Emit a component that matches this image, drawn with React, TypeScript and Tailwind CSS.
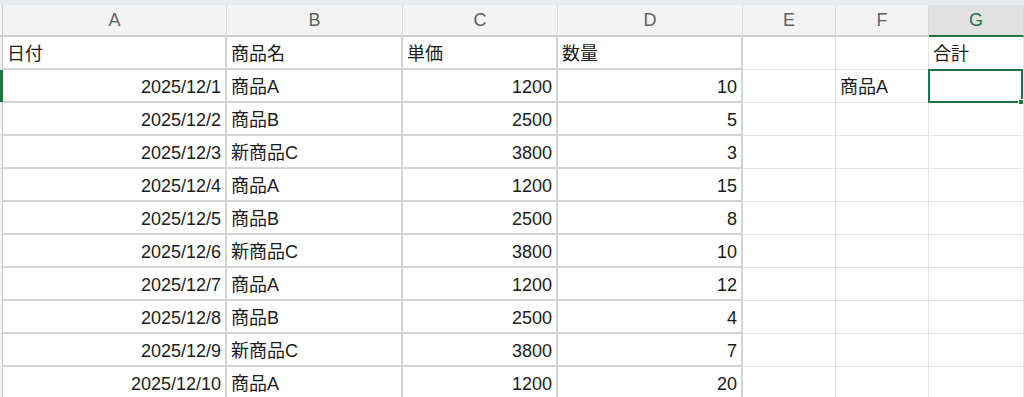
import React from 'react';

type Col = { key: string; width: string; heavy: boolean };

const columns: Col[] = [
  { key: 'A', width: 'w-[224px]', heavy: true },
  { key: 'B', width: 'w-[176px]', heavy: true },
  { key: 'C', width: 'w-[155px]', heavy: true },
  { key: 'D', width: 'w-[185px]', heavy: true },
  { key: 'E', width: 'w-[93px]', heavy: false },
  { key: 'F', width: 'w-[93px]', heavy: false },
  { key: 'G', width: 'w-[95px]', heavy: false },
];

type Cell = { text?: string; align?: 'left' | 'right' };

const rows: Cell[][] = [
  [{ text: '日付' }, { text: '商品名' }, { text: '単価' }, { text: '数量' }, {}, {}, { text: '合計' }],
  [
    { text: '2025/12/1', align: 'right' },
    { text: '商品A' },
    { text: '1200', align: 'right' },
    { text: '10', align: 'right' },
    {},
    { text: '商品A' },
    {},
  ],
];

const sales: [string, string, string, string][] = [
  ['2025/12/2', '商品B', '2500', '5'],
  ['2025/12/3', '新商品C', '3800', '3'],
  ['2025/12/4', '商品A', '1200', '15'],
  ['2025/12/5', '商品B', '2500', '8'],
  ['2025/12/6', '新商品C', '3800', '10'],
  ['2025/12/7', '商品A', '1200', '12'],
  ['2025/12/8', '商品B', '2500', '4'],
  ['2025/12/9', '新商品C', '3800', '7'],
  ['2025/12/10', '商品A', '1200', '20'],
];

sales.forEach(([d, n, p, q]) => {
  rows.push([
    { text: d, align: 'right' },
    { text: n },
    { text: p, align: 'right' },
    { text: q, align: 'right' },
    {},
    {},
    {},
  ]);
});

const ACTIVE_ROW = 1;
const ACTIVE_COL = 'G';

const App: React.FC = () => {
  return (
    <div
      className="h-[397px] w-[1024px] overflow-hidden bg-white text-[18px] text-[#1b1b1b]"
      style={{ fontFamily: '"Liberation Sans", "Noto Sans CJK JP", sans-serif' }}
    >
      {/* ribbon edge above the column headers */}
      <div className="h-[5px] bg-[#e8ebee]" />

      {/* column headers */}
      <div className="flex h-[32px]">
        <div className="w-[3px] shrink-0 border-r border-b-2 border-[#c8c8c8] bg-[#f3f3f3]" />
        {columns.map((c) => {
          const active = c.key === ACTIVE_COL;
          return (
            <div
              key={c.key}
              className={`${c.width} shrink-0 flex items-center justify-center border-r border-r-[#dadada] border-b-2 ${
                active
                  ? 'bg-[#e1e1e1] text-[#217346] border-b-[#217346]'
                  : 'bg-[#f3f3f3] text-[#616161] border-b-[#cfcfcf]'
              }`}
            >
              {c.key}
            </div>
          );
        })}
      </div>

      {/* sheet rows */}
      {rows.map((row, ri) => (
        <div key={ri} className="flex h-[33px]">
          <div
            className={`w-[3px] shrink-0 border-b border-[#dcdcdc] ${
              ri === ACTIVE_ROW ? 'bg-[#217346]' : 'bg-[#f3f3f3] border-r border-r-[#c8c8c8]'
            }`}
          />
          {columns.map((c, ci) => {
            const cell = row[ci];
            const selected = ri === ACTIVE_ROW && c.key === ACTIVE_COL;
            return (
              <div
                key={c.key}
                className={`${c.width} relative shrink-0 flex items-center whitespace-nowrap px-[4px] ${
                  cell.align === 'right' ? 'justify-end' : 'justify-start'
                } ${
                  c.heavy
                    ? 'border-r-2 border-b-2 border-[#d4d4d4]'
                    : 'border-r border-b border-[#e3e3e3]'
                }`}
              >
                <span className="leading-none pt-[2px]">{cell.text}</span>
                {selected && (
                  <>
                    <div className="absolute -top-[1px] -left-[1px] right-0 bottom-[-1px] border-2 border-[#217346]" />
                    <div className="absolute -right-[1px] -bottom-[3px] h-[6px] w-[6px] bg-[#217346] border border-white" />
                  </>
                )}
              </div>
            );
          })}
        </div>
      ))}
    </div>
  );
};

export default App;
